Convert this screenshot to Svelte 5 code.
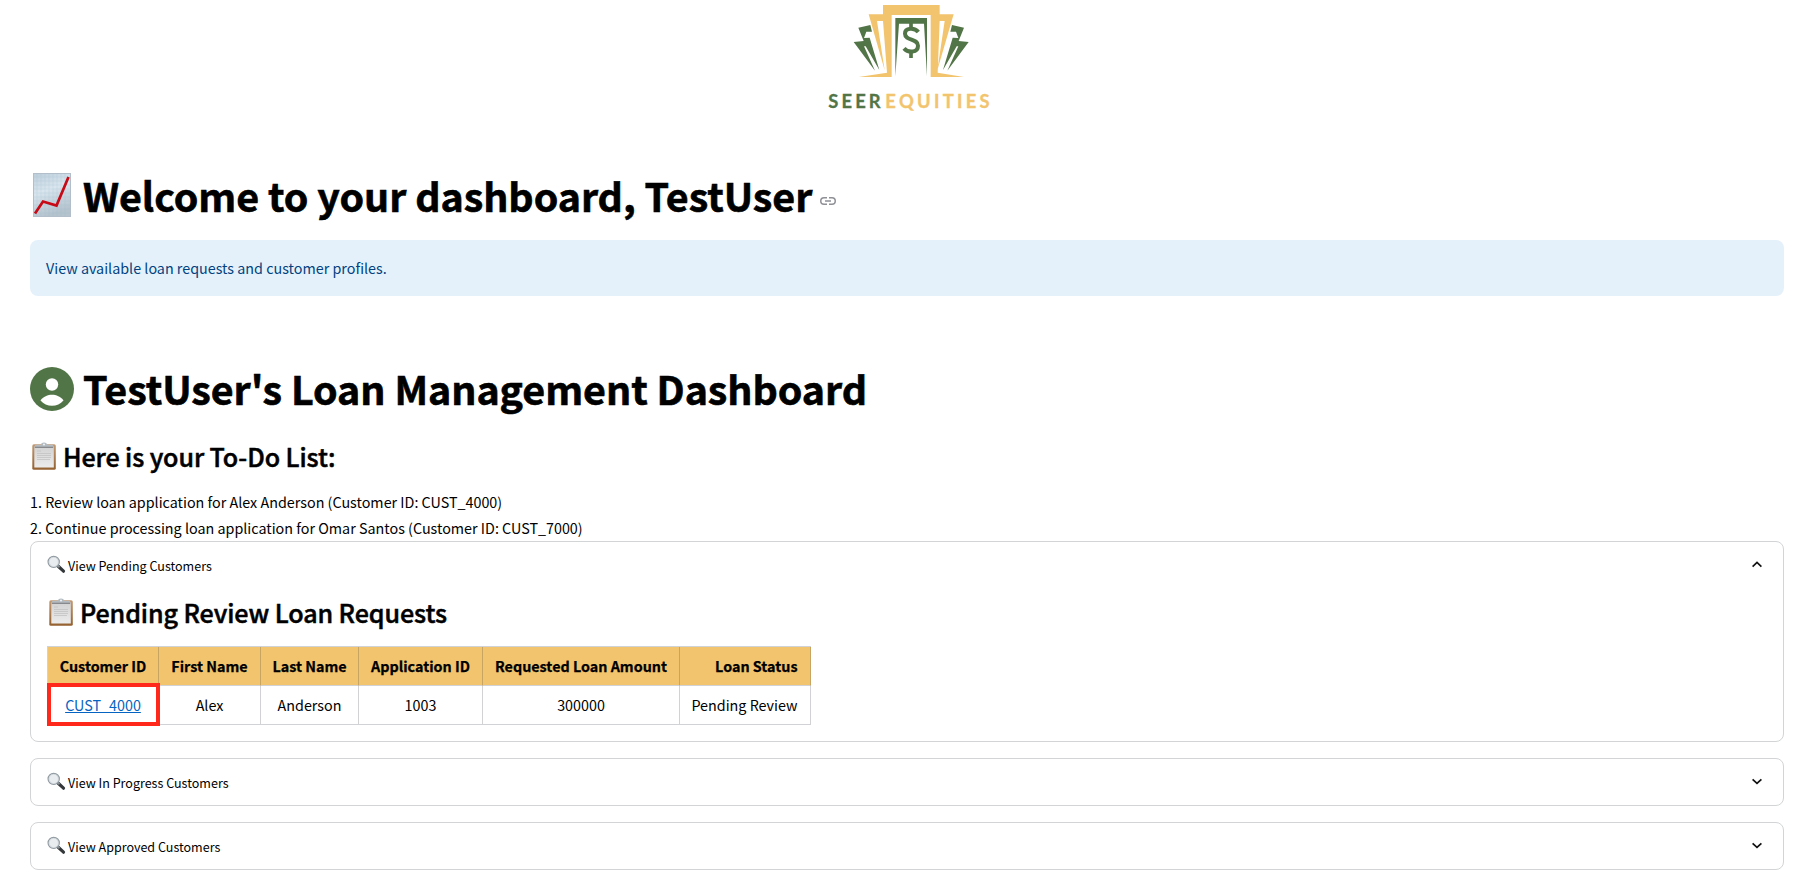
<script>
  const tasks = [
    'Review loan application for Alex Anderson (Customer ID: CUST_4000)',
    'Continue processing loan application for Omar Santos (Customer ID: CUST_7000)'
  ];
  const columns = [
    { label: 'Customer ID', width: 111 },
    { label: 'First Name', width: 102 },
    { label: 'Last Name', width: 98 },
    { label: 'Application ID', width: 124 },
    { label: 'Requested Loan Amount', width: 197 },
    { label: 'Loan Status', width: 131 }
  ];
  const row = ['CUST_4000', 'Alex', 'Anderson', '1003', '300000', 'Pending Review'];
  let panels = $state([
    { title: 'View Pending Customers', open: true },
    { title: 'View In Progress Customers', open: false },
    { title: 'View Approved Customers', open: false }
  ]);
</script>

{#snippet clipboard()}
  <svg class="clip" width="26" height="30" viewBox="0 0 26 30">
    <defs>
      <linearGradient id="board" x1="0" y1="0" x2="0" y2="1">
        <stop offset="0" stop-color="#c39a72" /><stop offset="1" stop-color="#94602f" />
      </linearGradient>
      <linearGradient id="sheet" x1="0" y1="0" x2="0" y2="1">
        <stop offset="0" stop-color="#d2d2d2" /><stop offset="1" stop-color="#ececec" />
      </linearGradient>
    </defs>
    <rect x="1.300" y="2.300" width="23.500" height="25.500" rx="1.600" fill="url(#board)" />
    <rect x="3.300" y="4.300" width="19.500" height="21.200" fill="url(#sheet)" />
    <path d="M6 9h4M6 11.500h14M6 13.500h14M6 15.500h14M6 17.500h13" stroke="#c3c3c3" stroke-width=".8" />
    <path d="M3.800 5.300V3.600q0-.8.8-.8h5.200q.4-2.300 3.200-2.300t3.200 2.300h5.200q.8 0 .8.8v1.700z" fill="#b3bac0" />
    <path d="M3.800 5.300h18.400" stroke="#77797b" stroke-width="1" />
    <circle cx="13" cy="2.600" r="1" fill="#eef3f8" />
  </svg>
{/snippet}

<main>
  <header>
    <svg width="200" height="120" viewBox="0 0 600 360">
      <path fill="#f2c46d" d="M219 15H389V43H431L382 211L404 63H389L383 218L462 231H362V45H245V231H146L231 218L219 63H201L224 211L176 43H219Z" />
      <g fill="#527548">
        <path d="M256 54H351V229L342 71H267L256 229Z" />
        <path d="M145 83L181 75L186 95H169L162 114L179 113L208 210L167 139H162L195 212L131 126L161 123Z" />
        <path d="M462 83L426 75L421 95H438L445 114L428 113L399 210L440 139H445L412 212L476 126L446 123Z" />
      </g>
      <path d="M303 67V86M303 158V174" fill="none" stroke="#527548" stroke-width="11" />
      <path d="M325 96C314 82 285 82 285 101C285 123 324 115 324 137C324 159 294 159 282 145" fill="none" stroke="#527548" stroke-width="12" />
      <text class="brand green" x="55" y="325" textLength="157">SEER</text>
      <text class="brand gold" x="226" y="325" textLength="313">EQUITIES</text>
    </svg>
  </header>

  <h1 class="welcome">
    <svg class="chart" width="38" height="44" viewBox="0 0 38 44">
      <defs>
        <linearGradient id="paper" x1="0" y1="0" x2="0.300" y2="1">
          <stop offset="0" stop-color="#bccdda" /><stop offset=".45" stop-color="#d9e6ef" /><stop offset="1" stop-color="#b4c3ce" />
        </linearGradient>
      </defs>
      <rect width="38" height="44" fill="url(#paper)" />
      <path d="M4 0V44M8 0V44M12 0V44M16 0V44M20 0V44M24 0V44M28 0V44M32 0V44M0 4H38M0 8H38M0 12H38M0 16H38M0 20H38M0 24H38M0 28H38M0 32H38M0 36H38M0 40H38" stroke="#9fb8cb" stroke-width=".5" opacity=".4" />
      <rect x=".5" y=".5" width="37" height="43" fill="none" stroke="#b2bfca" />
      <path d="M2 40.500L10 28.500L23.500 32.500L35.500 4" fill="none" stroke="#c70a16" stroke-width="2.700" />
    </svg>
    <span>Welcome to your dashboard, TestUser</span>
    <svg class="link" width="16" height="8" viewBox="0 0 16 8" fill="none" stroke="#8f9096" stroke-width="1.500">
      <path d="M7 .75H4a3.250 3.250 0 0 0 0 6.500H7M9 .75h3a3.250 3.250 0 0 1 0 6.500H9M5 4h6" />
    </svg>
  </h1>

  <div class="alert">View available loan requests and customer profiles.</div>

  <h1 class="manage">
    <svg class="person" width="44" height="44" viewBox="0 0 44 44">
      <circle cx="22" cy="22" r="22" fill="#527548" />
      <circle cx="22" cy="17.500" r="6.200" fill="#fff" />
      <path d="M10.500 33.500C13 29.700 18 27.800 22 27.800S31 29.700 33.500 33.500C30.500 37 26.500 38.800 22 38.800S13.500 37 10.500 33.500Z" fill="#fff" />
    </svg>
    <span>TestUser's Loan Management Dashboard</span>
  </h1>

  <h2 class="todo">{@render clipboard()}<span>Here is your To-Do List:</span></h2>
  <div class="tasks">
    {#each tasks as task, i}
      <div>{i + 1}. {task}</div>
    {/each}
  </div>

  <div class="panels">
    {#each panels as panel, i}
      <section>
        <button onclick={() => (panel.open = !panel.open)}>
          <svg class="glass" width="19" height="19" viewBox="0 0 19 19">
            <path d="M11.500 11.500L16.500 16.200" stroke="#35383b" stroke-width="3.200" stroke-linecap="round" />
            <path d="M10.700 10.500L12.500 12.300" stroke="#8b9093" stroke-width="1.800" />
            <circle cx="6.700" cy="6.900" r="5.600" fill="#e9edef" stroke="#8e989f" stroke-width="1.200" />
            <circle cx="6.700" cy="6.900" r="4.700" fill="none" stroke="#c5cbd0" stroke-width=".6" />
          </svg>
          <span>{panel.title}</span>
          <svg class="chev" width="10" height="7" viewBox="0 0 10 7" fill="none" stroke="#111" stroke-width="1.700">
            <path d={panel.open ? 'M.6 5.600L5 1.500L9.400 5.600' : 'M.6 1.300L5 5.400L9.400 1.300'} />
          </svg>
        </button>
        {#if panel.open && i === 0}
          <div class="body">
            <h2>{@render clipboard()}<span>Pending Review Loan Requests</span></h2>
            <table>
              <colgroup>
                {#each columns as c}<col style="width: {c.width}px" />{/each}
              </colgroup>
              <thead>
                <tr>{#each columns as c}<th>{c.label}</th>{/each}</tr>
              </thead>
              <tbody>
                <tr>
                  {#each row as cell, j}
                    <td>
                      {#if j === 0}<a href="#customer">{cell}</a><i class="mark"></i>{:else}{cell}{/if}
                    </td>
                  {/each}
                </tr>
              </tbody>
            </table>
          </div>
        {/if}
      </section>
    {/each}
  </div>
</main>

<style>
  :global(body) { background: #fff; overflow: hidden; }
  main {
    box-sizing: border-box;
    height: 881px;
    padding: 0 20px 0 30px;
    font-family: 'Source Sans Pro', 'Noto Sans CJK JP', 'Noto Sans CJK SC', sans-serif;
    font-size: 14.33px;
    color: #000;
  }
  header { display: flex; justify-content: center; height: 120px; padding-left: 6px; }
  .brand { font: 700 55px Lato, sans-serif; stroke-width: 1px; }
  .green { fill: #527548; stroke: #527548; }
  .gold { fill: #f2c46d; stroke: #f2c46d; }
  h1, h2 { margin: 0; display: flex; white-space: nowrap; }
  h1 {
    height: 56px;
    line-height: 56px;
    font-size: 39.4px;
    font-weight: 700;
    letter-spacing: -0.05px;
    -webkit-text-stroke: 0.6px #000;
  }
  h2 {
    height: 36px;
    line-height: 36px;
    font-size: 25.07px;
    font-weight: 500;
    letter-spacing: -0.09px;
    -webkit-text-stroke: 0.5px #000;
  }
  .welcome { margin-top: 47px; }
  .chart { margin: 6px 12px 0 3px; }
  .link { margin: 30px 0 0 8px; }
  .alert {
    box-sizing: border-box;
    height: 56px;
    margin-top: 17px;
    padding: 0 16px;
    line-height: 56px;
    border-radius: 8px;
    background: #e4f1fb;
    color: #004280;
  }
  .manage { margin-top: 64px; }
  .person { margin: 6.500px 9px 0 0; }
  .todo { margin-top: 22px; }
  .clip { margin: 4px 6px 0 1px; flex: none; }
  .tasks { margin-top: 15px; line-height: 26px; height: 52px; white-space: nowrap; }
  .panels { display: flex; flex-direction: column; gap: 16px; }
  section { border: 1px solid #d3d4d6; border-radius: 8px; }
  button {
    display: flex;
    align-items: center;
    width: 100%;
    height: 46px;
    padding: 0 21px 0 16px;
    border: 0;
    background: none;
    font: inherit;
    font-size: 12.54px;
    color: #000;
  }
  .glass { margin: -1px 2px 0 0; }
  .chev { margin: -2px 0 0 auto; }
  .body { padding: 6px 16px 16px; }
  table {
    width: 764px;
    margin-top: 16px;
    table-layout: fixed;
    border-collapse: separate;
    border-spacing: 0;
    border-top: 1px solid #d1d2d6;
    border-left: 1px solid #d1d2d6;
  }
  th, td {
    position: relative;
    box-sizing: border-box;
    height: 39px;
    padding: 0;
    line-height: 37px;
    vertical-align: top;
    text-align: center;
    white-space: nowrap;
    border-right: 1px solid rgba(49, 51, 63, 0.22);
    border-bottom: 1px solid #d1d2d6;
  }
  th { background: #f2c46d; font-weight: 700; -webkit-text-stroke: 0.25px #000; }
  th:last-child, td:last-child { text-align: right; padding-right: 12.500px; }
  a { color: #0563c1; text-decoration: underline; }
  .mark {
    position: absolute;
    left: -1px;
    top: -3px;
    box-sizing: border-box;
    width: 113px;
    height: 43px;
    border: 4px solid #ff281b;
    z-index: 1;
  }
</style>
